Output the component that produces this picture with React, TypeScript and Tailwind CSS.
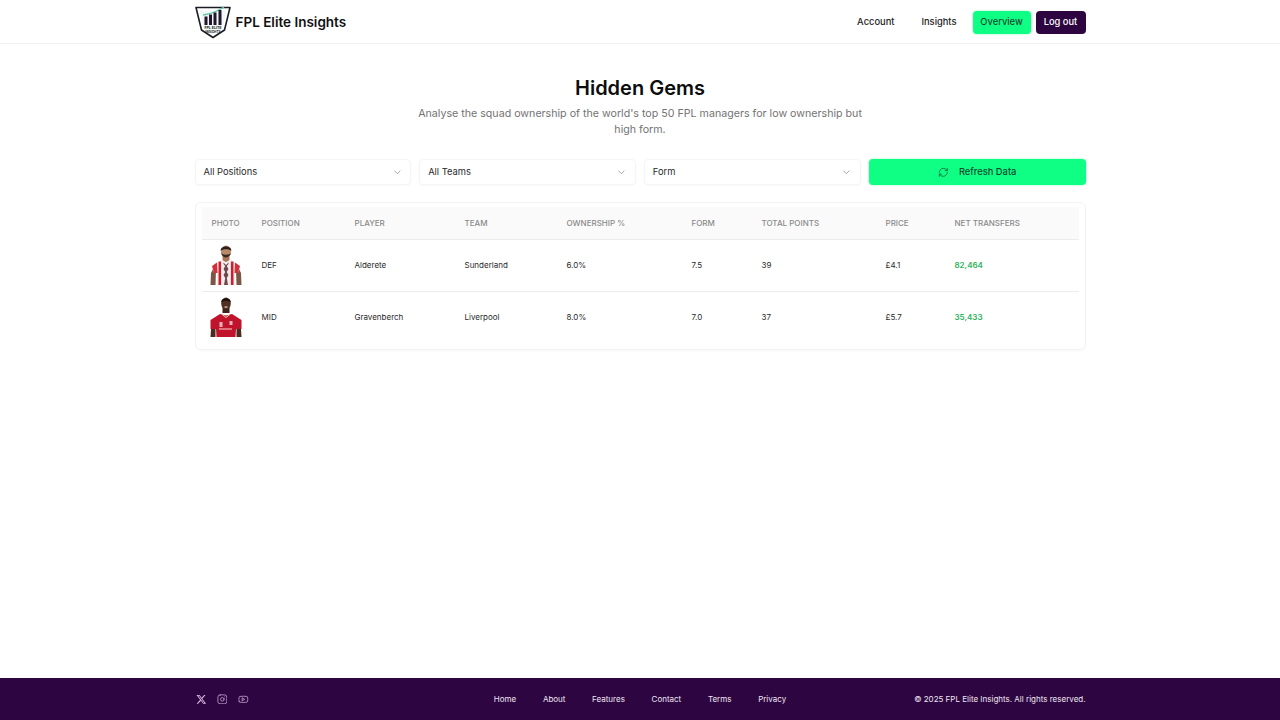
import { ChevronDown, RefreshCw, Instagram, Youtube } from "lucide-react";

function Logo() {
  return (
    <svg width="36" height="38" viewBox="0 0 36 38" className="shrink-0">
      <path d="M1 4.500 L35 4.500 L29.500 27 L18 34.500 L6.500 27 Z" fill="#ffffff" stroke="#1c1c24" strokeWidth="1.600" strokeLinejoin="round" />
      <path d="M4.500 7.500 L31.500 7.500 L27.500 25.500 L18 31.500 L8.500 25.500 Z" fill="#f1f7f5" />
      <path d="M8 12 C15 11 23 8 29 4" fill="none" stroke="#5fc4a8" strokeWidth="1.300" />
      <rect x="9.500" y="13.500" width="3" height="8.500" fill="#22152c" />
      <rect x="14" y="11.500" width="3" height="10.500" fill="#22152c" />
      <rect x="18.500" y="9.500" width="3" height="12.500" fill="#22152c" />
      <rect x="23.500" y="7" width="3" height="15" fill="#22152c" />
      <text x="18" y="25.500" textAnchor="middle" fontSize="3.600" fontWeight="700" fill="#1c1c24" fontFamily="Inter, sans-serif">FPL ELITE</text>
      <text x="18" y="29.500" textAnchor="middle" fontSize="3.200" fontWeight="700" fill="#1c1c24" fontFamily="Inter, sans-serif">INSIGHTS</text>
    </svg>
  );
}

function XIcon() {
  return (
    <svg width="10.670" height="10.670" viewBox="0 0 24 24" fill="currentColor">
      <path d="M18.200 2h3.400l-7.400 8.500L23 22h-6.800l-5.300-7-6.100 7H1.400l7.900-9.100L1 2h7l4.800 6.400L18.200 2zm-1.200 18h1.900L7 3.900H5L17 20z" />
    </svg>
  );
}

function Player1() {
  return (
    <svg width="32" height="40" viewBox="0 0 32 40">
      <path d="M0.500 40 L1 28 L3 24 L6 24 L5.500 40 Z M31.500 40 L31 28 L29 24 L26 24 L26.500 40 Z" fill="#7a5644" />
      <path d="M12.500 10 L19.500 10 L19.500 15 L16 18 L12.500 15 Z" fill="#a87658" />
      <ellipse cx="16" cy="6.500" rx="5" ry="6" fill="#b98a68" />
      <path d="M10.700 6 C10 0 22 0 21.300 6 C20 3.500 12 3.500 10.700 6 Z" fill="#2a201c" />
      <path d="M11 7.500 C12 14 20 14 21 7.500 C20 10.500 12 10.500 11 7.500 Z" fill="#3a2a22" />
      <path d="M2 21 L11 15 L16 17 L21 15 L30 21 L28 28 L25 28 L25 40 L7 40 L7 28 L4 28 Z" fill="#f6eeee" />
      <path d="M2 21 L7 17.500 L7.500 28 L4 28 Z M30 21 L25 17.500 L24.500 28 L28 28 Z" fill="#d4303c" />
      <rect x="8.500" y="16.500" width="2.600" height="23.500" fill="#c9202f" />
      <rect x="20.900" y="16.500" width="2.600" height="23.500" fill="#c9202f" />
      <path d="M13.500 17.500 L16 20 L18.500 17.500 L18.500 19 L16.800 21 L18.500 24 L16.800 27 L18.500 30 L16.800 33 L18 40 L14 40 L15.200 33 L13.500 30 L15.200 27 L13.500 24 L15.200 21 L13.500 19 Z" fill="#6d4a50" />
    </svg>
  );
}

function Player2() {
  return (
    <svg width="32" height="40" viewBox="0 0 32 40">
      <path d="M0.500 40 L1 32 L5.500 32 L5.500 40 Z M31.500 40 L31 32 L26.500 32 L26.500 40 Z" fill="#4a2c20" />
      <path d="M12.500 10 L19.500 10 L19.500 16 L12.500 16 Z" fill="#3d2418" />
      <ellipse cx="16" cy="6.500" rx="4.800" ry="6" fill="#4f2f20" />
      <path d="M11.200 5.500 C10.800 0 21.200 0 20.800 5.500 C19 3 13 3 11.200 5.500 Z" fill="#17100d" />
      <path d="M14 10 C15 11 17 11 18 10 C17.500 9.400 14.500 9.400 14 10 Z" fill="#e9d7cd" />
      <path d="M0.500 23 L10 17 L16 18.500 L22 17 L31.500 23 L31.500 32 L26 32 L25.500 40 L6.500 40 L6 32 L0.500 32 Z" fill="#c0142c" />
      <path d="M12.500 17 L16 20 L19.500 17 L19.500 18.300 L16 21 L12.500 18.300 Z" fill="#efd7a6" />
      <rect x="9.500" y="25" width="3" height="5" fill="#f3cfcf" opacity="0.85" />
      <rect x="19.500" y="24" width="3" height="4" fill="#f3cfcf" opacity="0.85" />
      <rect x="9" y="31" width="13" height="2" fill="#e88a92" opacity="0.8" />
    </svg>
  );
}

const columns = ["Photo", "Position", "Player", "Team", "Ownership %", "Form", "Total Points", "Price", "Net Transfers"];
const rows = [
  { p: <Player1 />, pos: "DEF", name: "Alderete", team: "Sunderland", own: "6.0%", form: "7.5", pts: "39", price: "£4.1", net: "82,464" },
  { p: <Player2 />, pos: "MID", name: "Gravenberch", team: "Liverpool", own: "8.0%", form: "7.0", pts: "37", price: "£5.7", net: "35,433" },
];

function Select({ label }: { label: string }) {
  return (
    <div className="flex h-[26px] flex-1 items-center justify-between rounded-[4px] border border-[#f5f5f5] bg-white px-2 text-[9.330px] text-[#2a2a2a] shadow-[0_1px_2px_rgba(0,0,0,0.03)]">
      <span>{label}</span>
      <ChevronDown size={10.670} strokeWidth={1.500} className="text-[#777777]" />
    </div>
  );
}

export default function App() {
  return (
    <div className="flex min-h-[720px] flex-col bg-white font-['Inter',sans-serif]">
      <header className="h-[44px] border-b border-[#f1f1f1]">
        <div className="mx-auto flex h-[43px] w-[891px] items-center justify-between">
          <div className="flex items-center gap-[5px]">
            <Logo />
            <span className="pt-[1px] text-[13.500px] font-semibold text-[#111111]">FPL Elite Insights</span>
          </div>
          <nav className="flex items-center pt-[1px] text-[9.330px] font-medium text-[#1c1c1c]">
            <span className="mr-[27px]">Account</span>
            <span className="mr-[16px]">Insights</span>
            <span className="mr-[5px] flex h-[23px] w-[58px] items-center justify-center rounded-[4px] bg-[#0fff85] text-[#124a30] shadow-[0_0_2px_rgba(15,255,133,0.6)]">Overview</span>
            <span className="flex h-[23px] w-[50px] items-center justify-center rounded-[4px] bg-[#2d0540] text-white">Log out</span>
          </nav>
        </div>
      </header>

      <main className="mx-auto w-[891px] flex-1">
        <h1 className="mt-[30px] text-center text-[20px] leading-[28px] font-semibold text-[#0d0d0d]">Hidden Gems</h1>
        <p className="mx-auto mt-[4px] w-[460px] text-center text-[10.670px] leading-[16px] text-[#737373]">
          Analyse the squad ownership of the world's top 50 FPL managers for low ownership but high form.
        </p>

        <div className="mt-[21px] flex gap-[8px]">
          <Select label="All Positions" />
          <Select label="All Teams" />
          <Select label="Form" />
          <div className="flex h-[26px] w-[217px] shrink-0 items-center justify-center gap-[10.670px] rounded-[4px] bg-[#0fff85] text-[9.330px] font-medium text-[#124a30] shadow-[0_0_2px_rgba(15,255,133,0.6)]">
            <RefreshCw size={10.670} strokeWidth={1.500} />
            <span>Refresh Data</span>
          </div>
        </div>

        <div className="mt-[17px] rounded-[6px] border border-[#f3f3f3] px-[6px] pt-[4px] pb-[6px] shadow-[0_1px_2px_rgba(0,0,0,0.03)]">
          <table className="w-full table-fixed border-collapse text-left">
            <colgroup>
              <col className="w-[50px]" />
              <col className="w-[93px]" />
              <col className="w-[110px]" />
              <col className="w-[102px]" />
              <col className="w-[125px]" />
              <col className="w-[70px]" />
              <col className="w-[124px]" />
              <col className="w-[69px]" />
              <col />
            </colgroup>
            <thead>
              <tr className="h-[32px] border-b border-[#ececec] bg-[#fafafa]">
                {columns.map((c) => (
                  <th key={c} className="px-[10px] text-[8px] font-medium whitespace-nowrap text-[#8a8a8a] uppercase">{c}</th>
                ))}
              </tr>
            </thead>
            <tbody className="text-[8px] text-[#2a2a2a]">
              {rows.map((r, i) => (
                <tr key={r.name} className={i === 0 ? "h-[52px] border-b border-[#ececec]" : "h-[52px]"}>
                  <td className="px-[8px]"><div className="flex justify-start">{r.p}</div></td>
                  <td className="px-[10px]">{r.pos}</td>
                  <td className="px-[10px]">{r.name}</td>
                  <td className="px-[10px]">{r.team}</td>
                  <td className="px-[10px]">{r.own}</td>
                  <td className="px-[10px]">{r.form}</td>
                  <td className="px-[10px]">{r.pts}</td>
                  <td className="px-[10px]">{r.price}</td>
                  <td className="px-[10px] font-semibold text-[#2fb35c]">{r.net}</td>
                </tr>
              ))}
            </tbody>
          </table>
        </div>
      </main>

      <footer className="h-[42px] bg-[#2d0540] text-[8px] text-[#efe6f3]">
        <div className="mx-auto grid h-full w-[891px] grid-cols-[1fr_auto_1fr] items-center">
          <div className="flex items-center gap-[10.670px] pl-[1px] text-[#d9b8e6]">
            <XIcon />
            <Instagram size={10.670} strokeWidth={1.600} />
            <Youtube size={10.670} strokeWidth={1.600} />
          </div>
          <nav className="flex gap-[26.670px]">
            <span>Home</span>
            <span>About</span>
            <span>Features</span>
            <span>Contact</span>
            <span>Terms</span>
            <span>Privacy</span>
          </nav>
          <div className="text-right">© 2025 FPL Elite Insights. All rights reserved.</div>
        </div>
      </footer>
    </div>
  );
}
